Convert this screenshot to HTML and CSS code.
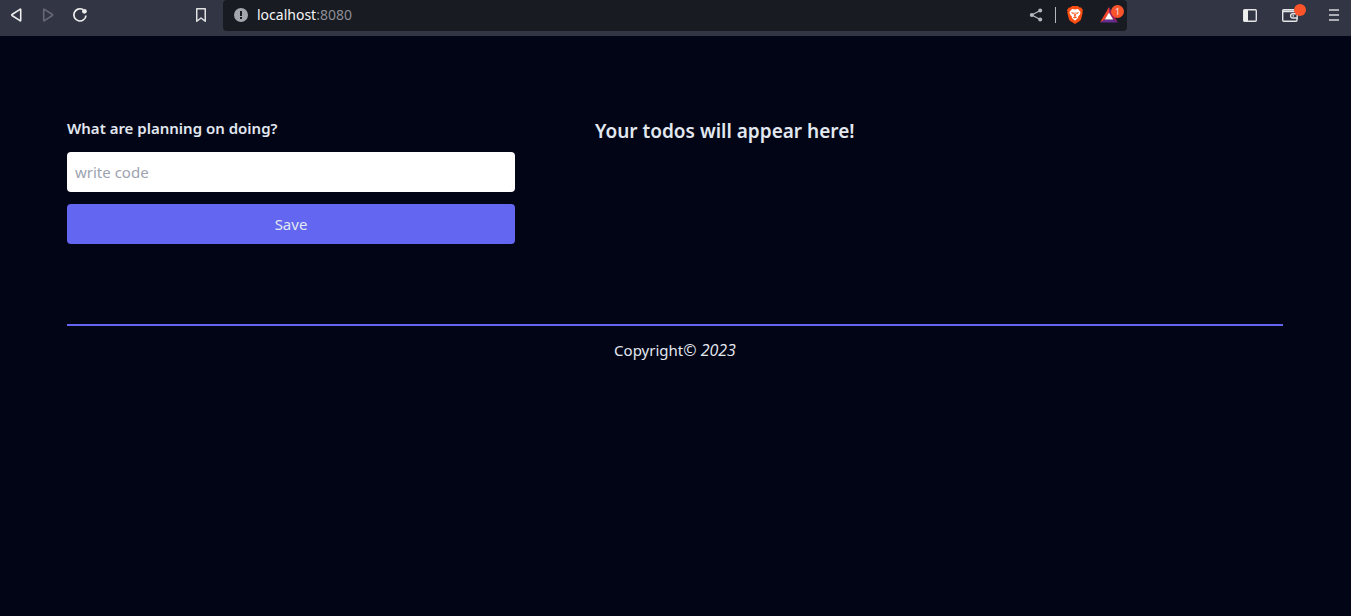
FILE: index.html
```html
<!DOCTYPE html>
<html lang="en">
<head>
<meta charset="utf-8">
<meta name="viewport" content="width=device-width, initial-scale=1">
<title>Todos</title>
<link rel="stylesheet" href="styles.css">
</head>
<body>
<header class="toolbar">
  <nav class="nav-buttons" aria-label="Browser navigation">
    <button class="icon-button" type="button" aria-label="Back">
      <svg width="16" height="16" viewBox="0 0 16 16" fill="none" stroke="#eeeeef" stroke-width="1.6" stroke-linejoin="round"><path d="M12.700 2.700v10.600q0 .8-.7.4L4 8.500q-.6-.5 0-1l8-5.200q.7-.4.7.4z"/></svg>
    </button>
    <button class="icon-button" type="button" aria-label="Forward">
      <svg width="16" height="16" viewBox="0 0 16 16" fill="none" stroke="#666875" stroke-width="1.6" stroke-linejoin="round"><path d="M3.700 2.700v10.600q0 .8.7.4l8-5.200q.6-.5 0-1l-8-5.200q-.7-.4-.7.4z"/></svg>
    </button>
    <button class="icon-button" type="button" aria-label="Reload">
      <svg width="16" height="16" viewBox="0 0 16 16" fill="none" stroke="#eeeeef" stroke-width="1.7"><path d="M11 2.600A6.100 6.100 0 1 0 14 8.500"/><circle cx="12.400" cy="4.300" r="2.400" fill="#eeeeef" stroke="none"/></svg>
    </button>
    <button class="icon-button bookmark" type="button" aria-label="Bookmark">
      <svg width="16" height="16" viewBox="0 0 16 16" fill="none" stroke="#e2e2e4" stroke-width="1.5" stroke-linejoin="round"><path d="M3.750 1.750h8.500v12.500L8 11l-4.250 3.250z"/></svg>
    </button>
  </nav>
  <div class="address">
    <svg width="16" height="16" viewBox="0 0 16 16"><circle cx="8" cy="8" r="7" fill="#a4a6ae"/><path d="M7 4h2v5H7zM7 10h2v2H7z" fill="#181b22"/></svg>
    <div class="url">localhost<span class="port">:8080</span></div>
    <div class="address-actions">
      <button class="icon-button" type="button" aria-label="Share">
        <svg width="16" height="16" viewBox="0 0 16 16"><path d="M12.200 3.500 3.800 8l8.400 4.500" fill="none" stroke="#b6b8bd" stroke-width="1.3"/><g fill="#b6b8bd"><circle cx="12.200" cy="3.600" r="2"/><circle cx="3.800" cy="8" r="2"/><circle cx="12.200" cy="12.400" r="2"/></g></svg>
      </button>
      <span class="divider"></span>
      <button class="icon-button" type="button" aria-label="Brave Shields">
        <svg width="16" height="18" viewBox="0 0 16 18"><path d="M5 0h6l1.600 1.500 1.500-.1L16 4l-.6 1.600.3 1.200-1.600 6.100q-.4 1.500-1.700 2.400L8 18l-4.400-2.700q-1.300-.9-1.700-2.400L.3 6.800l.3-1.200L0 4l1.900-2.600 1.500.1z" fill="#fb4e12"/><path d="m5 3 3 .6L11 3l2.500 3-.5 2.500-2 2.300.2 1L8 14.800l-3.200-3 .2-1-2-2.300L2.500 6z" fill="#fff"/><path d="m3.800 5.900 3.100.9-.6 1.600zM12.200 5.900l-3.100.9.6 1.600zM8 5.500l1 4-1 .8-1-.8zM5.800 11.200l2.200-.9 2.200.9L8 12.600z" fill="#fb4e12"/></svg>
      </button>
      <button class="icon-button rewards" type="button" aria-label="Brave Rewards, 1 notification">
        <svg width="18" height="16" viewBox="0 0 18 16"><path d="M9 0 0 15.500l5-3L9 6z" fill="#f0442c"/><path d="m9 0 9 15.500-5-3L9 6z" fill="#9e1f63"/><path d="M0 15.500h18l-5-3H5z" fill="#662d91"/><path d="m9 5.500 4.200 7H4.800z" fill="#fff"/></svg>
        <span class="badge">1</span>
      </button>
    </div>
  </div>
  <div class="window-actions">
    <button class="icon-button" type="button" aria-label="Sidebar">
      <svg width="16" height="16" viewBox="0 0 16 16"><rect x="1.700" y="2.700" width="12.600" height="11.600" rx="1" fill="none" stroke="#e5e5e7" stroke-width="1.4"/><path d="M2 3h4v11H2z" fill="#eeeeef"/></svg>
    </button>
    <button class="icon-button wallet" type="button" aria-label="Wallet">
      <svg width="18" height="16" viewBox="0 0 18 16" fill="none" stroke="#e5e5e7" stroke-width="1.4"><path d="M16 6.500V5.400q0-.9-1-.9H2.700q-1-.1-1-1 0-.8 1-.8H13M1.700 3.500v9.600q0 1.200 1.200 1.200h12q1.100 0 1.100-1.200V11"/><path d="M16.200 6.800h-4.500a2.100 2.100 0 0 0 0 4.200h4.500z"/><path d="M11.500 8.900h1.600"/></svg>
      <span class="dot"></span>
    </button>
    <button class="icon-button menu" type="button" aria-label="Menu">
      <svg width="16" height="16" viewBox="0 0 16 16" fill="none" stroke="#d8d8dc" stroke-width="1.5"><path d="M3 3h10M3 8h10M3 13h10"/></svg>
    </button>
  </div>
</header>
<div class="page">
  <main class="content">
    <form class="todo-form">
      <label class="todo-label" for="todo">What are planning on doing?</label>
      <input class="todo-input" id="todo" type="text" placeholder="write code">
      <button class="save" type="button">Save</button>
    </form>
    <section class="todos">
      <h1 class="todos-title">Your todos will appear here!</h1>
    </section>
  </main>
  <footer class="footer">Copyright<em class="year">© 2023</em></footer>
</div>
</body>
</html>
```
FILE: styles.css
```css
* { box-sizing: border-box; }

body {
  margin: 0;
  min-height: 100vh;
  background: #020516;
  color: #e2e8f0;
  font-family: "Noto Sans", sans-serif;
  font-size: 15px;
  line-height: 24px;
}

button, input { font: inherit; }

.toolbar {
  display: flex;
  height: 36px;
  padding: 0 9px 0 8px;
  background: #323543;
}

.nav-buttons, .window-actions, .address, .address-actions {
  display: flex;
  align-items: center;
  height: 30px;
}

.nav-buttons {
  flex: none;
  width: 201px;
  gap: 16px;
}

.icon-button {
  position: relative;
  display: flex;
  padding: 0;
  border: 0;
  background: none;
}

.bookmark { margin-left: auto; }

.address {
  flex: 1;
  height: 31px;
  margin-left: 14px;
  padding: 0 9px 1px 10px;
  gap: 8px;
  border-radius: 4px;
  background: #181b22;
}

.url {
  color: #f5f5f7;
  font-size: 14px;
}

.port { color: #8b8d93; }

.address-actions {
  margin-left: auto;
  gap: 11px;
}

.divider {
  width: 1px;
  height: 16px;
  background: #b6b8bd;
}

.rewards { margin-left: 6px; }

.badge, .dot {
  position: absolute;
  border-radius: 50%;
  background: #fb542b;
}

.badge {
  top: -2px;
  right: -6px;
  width: 13px;
  height: 13px;
  color: #e8e0e4;
  font-size: 9px;
  line-height: 13px;
  text-align: center;
}

.window-actions {
  flex: none;
  justify-content: flex-end;
  width: 215px;
  gap: 23px;
}

.dot {
  top: -3px;
  right: -7px;
  width: 12px;
  height: 12px;
}

.menu { margin-left: 4px; }

.page { padding: 0 68px 0 67px; }

.content {
  display: flex;
  gap: 80px;
  padding: 80px 0;
}

.todo-form {
  display: flex;
  flex-direction: column;
  flex: 0 1 448px;
  gap: 12px;
}

.todo-label { font-weight: 600; }

.todo-input {
  width: 100%;
  height: 40px;
  padding: 8px;
  border: 0;
  border-radius: 4px;
  background: #fff;
  color: #020516;
}

.todo-input::placeholder { color: #9ca3af; }

.save {
  height: 40px;
  padding: 8px;
  border: 0;
  border-radius: 4px;
  background: #6366f1;
  color: #e2e8f0;
}

.todos { flex: 1; }

.todos-title {
  margin: 0;
  font-size: 19px;
  font-weight: 600;
  line-height: 30px;
}

.footer {
  padding: 12px 0;
  border-top: 2px solid #6366f1;
  text-align: center;
}

.year {
  font-family: "Open Sans", "Noto Sans", sans-serif;
  font-size: 16px;
}
```
